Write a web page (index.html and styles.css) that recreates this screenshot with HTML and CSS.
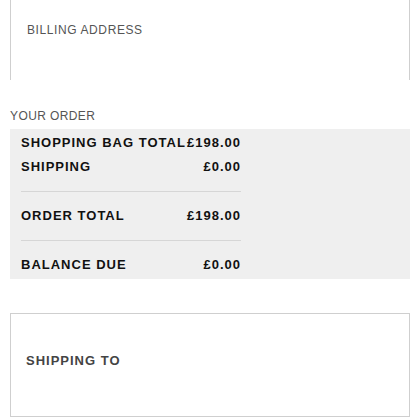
FILE: index.html
```html
<!DOCTYPE html>
<html lang="en">
<head>
<meta charset="utf-8">
<title>Checkout</title>
<link rel="stylesheet" href="styles.css">
</head>
<body>
<div class="page">
  <section class="panel billing">
    <h2 class="panel-title">BILLING ADDRESS</h2>
  </section>

  <h3 class="section-title">YOUR ORDER</h3>
  <div class="summary">
    <div class="summary-inner">
      <div class="row"><span>SHOPPING BAG TOTAL</span><span>£198.00</span></div>
      <div class="row"><span>SHIPPING</span><span>£0.00</span></div>
      <div class="divider"></div>
      <div class="row"><span>ORDER TOTAL</span><span>£198.00</span></div>
      <div class="divider"></div>
      <div class="row"><span>BALANCE DUE</span><span>£0.00</span></div>
    </div>
  </div>

  <section class="panel shipping">
    <h2 class="panel-title strong">SHIPPING TO</h2>
  </section>
</div>
</body>
</html>
```

FILE: styles.css
```css
html, body {
  margin: 0;
  padding: 0;
  background: #fff;
}

body {
  font-family: "Liberation Sans", Arial, sans-serif;
}

.page {
  padding: 0 10px;
  display: flex;
  flex-direction: column;
}

.panel {
  border: 1px solid #cfcfcf;
  box-sizing: border-box;
}

.billing {
  border-top: none;
  border-bottom: none;
  height: 80px;
  padding: 22px 16px 0;
}

.panel-title {
  margin: 0;
  font-size: 12px;
  line-height: 16px;
  font-weight: normal;
  letter-spacing: 0.6px;
  color: #555;
}

.panel-title.strong {
  font-size: 13px;
  font-weight: bold;
  letter-spacing: 1px;
  color: #444;
}

.section-title {
  margin: 28px 0 0;
  font-size: 12px;
  line-height: 16px;
  font-weight: normal;
  letter-spacing: 0.4px;
  color: #555;
}

.summary {
  margin-top: 5px;
  background: #efefef;
  padding: 2px 11px 2px;
}

.summary-inner {
  width: 220px;
}

.row {
  display: flex;
  justify-content: space-between;
  font-size: 13px;
  line-height: 24px;
  font-weight: bold;
  letter-spacing: 1px;
  color: #111;
  white-space: nowrap;
}

.divider {
  height: 1px;
  background: #d6d6d6;
  margin: 12px 0;
}

.shipping {
  margin-top: 34px;
  height: 104px;
  padding: 39px 15px 0;
}
```
